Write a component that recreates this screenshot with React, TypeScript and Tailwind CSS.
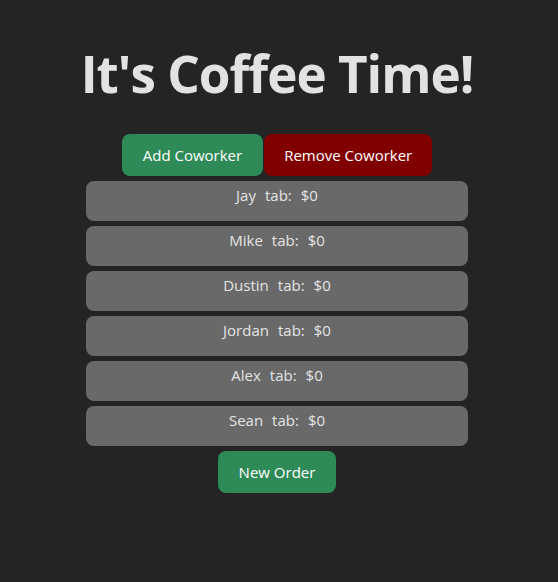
import React from "react";

const names = ["Jay", "Mike", "Dustin", "Jordan", "Alex", "Sean"];

export default function App() {
  return (
    <div
      className="min-h-[582px] w-full bg-[#242424] text-[rgba(255,255,255,0.87)] flex flex-col items-center pr-[4px]"
      style={{ fontFamily: '"Open Sans", "Noto Sans", sans-serif' }}
    >
      <h1 className="mt-[45px] text-[51.2px] leading-[1.1] font-bold tracking-[-1px]">It's Coffee Time!</h1>
      <div className="mt-[33px] flex">
        <button className="h-[42px] px-[21px] rounded-[8px] bg-[#2e8b57] text-[15px] text-white">Add Coworker</button>
        <button className="ml-[1px] h-[42px] px-[20px] rounded-[8px] bg-[#800000] text-[15px] text-white">Remove Coworker</button>
      </div>
      <div className="mt-[5px] flex flex-col gap-[5px] w-[382px]">
        {names.map((n) => (
          <div key={n} className="h-[40px] rounded-[8px] bg-[#696969] flex justify-center gap-[9px] pt-[2px] text-[15px] leading-[24px] text-[#e4e4e4]">
            <span>{n}</span>
            <span>tab:</span>
            <span>$0</span>
          </div>
        ))}
      </div>
      <button className="mt-[5px] h-[42px] w-[118px] rounded-[8px] bg-[#2e8b57] text-[15px] text-white">New Order</button>
    </div>
  );
}
